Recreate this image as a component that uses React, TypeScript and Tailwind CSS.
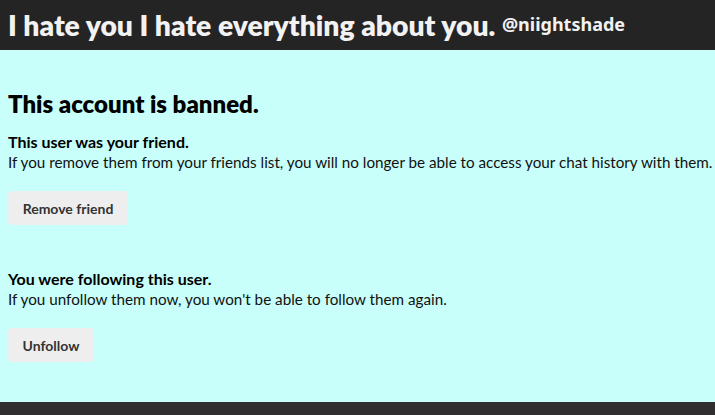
const App = () => {
  return (
    <div className="min-h-[415px] flex flex-col bg-[#c8fffa] font-['Lato',sans-serif]">
      <header className="h-[50px] bg-[#242424] px-2 flex items-center">
        <h1 className="text-[28.3px] font-extrabold text-[#f2f2f2] leading-none whitespace-nowrap">
          I hate you I hate everything about you.{" "}
          <span className="text-[18px] font-bold font-['Noto_Sans',sans-serif] relative -top-[5px]">@niightshade</span>
        </h1>
      </header>

      <main className="flex-1 px-2 pt-[39px] text-black">
        <h2 className="text-[24px] font-extrabold leading-[29px]">This account is banned.</h2>

        <section className="mt-[14px]">
          <p className="text-[16px] font-bold leading-[20px]">This user was your friend.</p>
          <p className="text-[15.22px] leading-[20px] text-[#111] whitespace-nowrap">
            If you remove them from your friends list, you will no longer be able to access your chat history with them.
          </p>
          <button className="mt-[19px] h-[34px] w-[120px] rounded bg-[#eeeeee] text-[14px] font-bold text-[#333]">
            Remove friend
          </button>
        </section>

        <section className="mt-[44px]">
          <p className="text-[16px] font-bold leading-[20px]">You were following this user.</p>
          <p className="text-[15.22px] leading-[20px] text-[#111]">
            If you unfollow them now, you won't be able to follow them again.
          </p>
          <button className="mt-[19px] h-[34px] w-[86px] rounded bg-[#eeeeee] text-[14px] font-bold text-[#333]">
            Unfollow
          </button>
        </section>
      </main>

      <footer className="h-[13px] bg-[#302e2f]" />
    </div>
  );
};

export default App;
